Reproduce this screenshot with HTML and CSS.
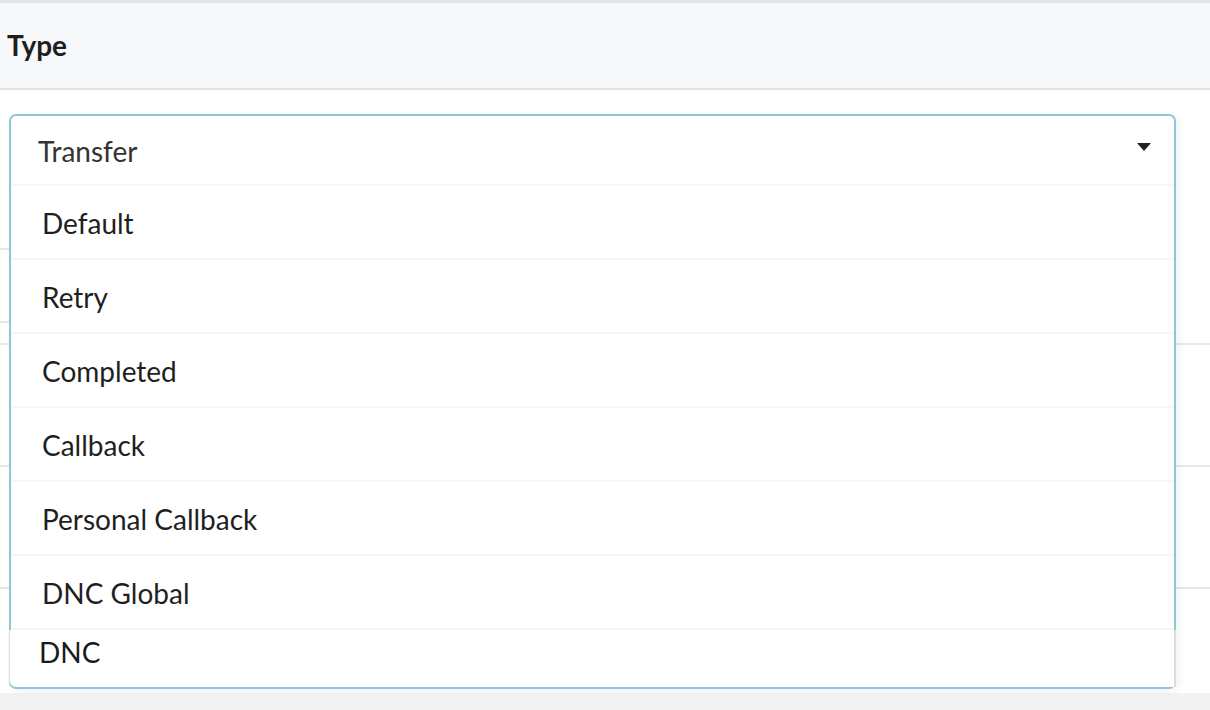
FILE: index.html
```html
<!DOCTYPE html>
<html>
<head>
<meta charset="utf-8">
<link rel="stylesheet" href="styles.css">
</head>
<body>
<div class="page">
  <div class="header"><span class="title">Type</span></div>
  <div class="rows">
    <div class="row r1 short"></div>
    <div class="row r2 short"></div>
    <div class="row r3"></div>
    <div class="row r4"></div>
    <div class="row r5"></div>
    <div class="row r6"></div>

    <div class="dropdown">
      <div class="select-head">
        <span class="value">Transfer</span>
        <svg class="caret" width="14" height="8" viewBox="0 0 14 8"><path d="M0 0 H14 L7 8 Z" fill="#222"/></svg>
      </div>
      <ul class="menu">
        <li class="item">Default</li>
        <li class="item">Retry</li>
        <li class="item">Completed</li>
        <li class="item">Callback</li>
        <li class="item">Personal Callback</li>
        <li class="item">DNC Global</li>
      </ul>
      <div class="tail"><span>DNC</span></div>
    </div>
  </div>
  <div class="footer"></div>
</div>
</body>
</html>
```

FILE: styles.css
```css
* { box-sizing: border-box; }
html, body { margin: 0; padding: 0; }
body {
  font-family: Lato, "Noto Sans", sans-serif;
  background: #fff;
  color: #222;
  width: 1210px;
  height: 710px;
  overflow: hidden;
}
.page { display: flex; flex-direction: column; height: 710px; }
.header {
  height: 90px;
  background: #f7f8fa;
  border-top: 3px solid #e4e5e7;
  border-bottom: 2px solid #e2e3e5;
  display: flex;
  align-items: center;
  padding-left: 7px;
}
.title { font-weight: 700; font-size: 28px; color: #1e1e1e; margin-top: -2px; }
.rows { position: relative; display: flex; flex-direction: column; }
.row { border-bottom: 2px solid #e8e8e8; }
.row.short {
  border-bottom: none;
  background: linear-gradient(#e8e8e8, #e8e8e8) left bottom / 30px 2px no-repeat;
}
.r1 { height: 160px; }
.r2 { height: 73px; }
.r3 { height: 22px; }
.r4 { height: 122px; }
.r5 { height: 122px; }
.r6 { height: 104px; border-bottom: none; }
.footer { flex: 1; background: #f3f3f3; }

.dropdown {
  position: absolute;
  left: 9px;
  top: 24px;
  width: 1167px;
  border: 2px solid #8fc7d8;
  border-radius: 7px;
  background: #fff;
  box-shadow: 3px 2px 8px rgba(0,0,0,0.06);
}
.select-head {
  height: 70px;
  display: flex;
  align-items: center;
  justify-content: space-between;
  padding: 0 23px 0 27px;
  border-bottom: 2px solid #f6f6f6;
}
.value { font-size: 28px; color: #333; margin-top: 2px; }
.caret { display: block; margin-top: -6px; }
.menu { list-style: none; margin: 0; padding: 0; }
.item {
  height: 74px;
  display: flex;
  align-items: center;
  padding-left: 31px;
  padding-top: 2px;
  font-size: 28px;
  color: #1f1f1f;
  border-bottom: 2px solid #f6f6f6;
}
.tail {
  height: 57px;
  margin: 0 -2px;
  background: #fff;
  border-left: 1px solid #dcdcdc;
  border-right: 2px solid #dcdcdc;
  border-bottom-left-radius: 7px;
  display: flex;
  align-items: center;
  padding-left: 29px;
  padding-bottom: 14px;
  font-size: 28px;
  color: #1a1a1a;
}
```
